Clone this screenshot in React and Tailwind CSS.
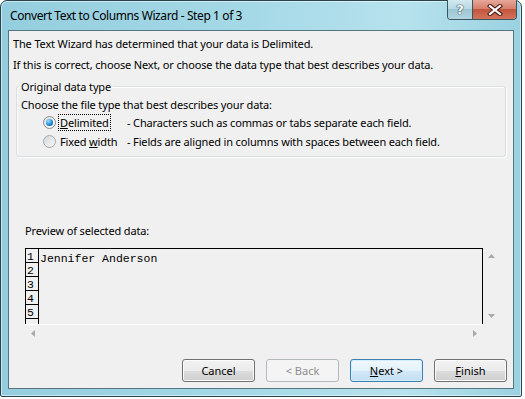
export default function App() {
  const rows = ["1", "2", "3", "4", "5"];

  const Arrow = ({ dir }) => {
    const pts = {
      up: "0,4 3.5,0 7,4",
      down: "0,0 3.5,4 7,0",
      left: "4,0 0,3.5 4,7",
      right: "0,0 4,3.5 0,7",
    }[dir];
    const wide = dir === "up" || dir === "down";
    return (
      <svg width={wide ? 7 : 4} height={wide ? 4 : 7}>
        <polygon points={pts} fill="#a9a9a9" />
      </svg>
    );
  };

  const btn =
    "w-[73px] h-[23px] rounded-[3px] border flex items-center justify-center text-[11px] leading-none";

  return (
    <div className="w-[525px] h-[399px] bg-white text-black font-['Noto_Sans',sans-serif]">
      <div className="w-[522px] h-[397px] flex flex-col rounded-t-[7px] rounded-b-[2px] border border-[#2b434c] bg-[linear-gradient(90deg,#94cede,#a4d8e6_45%,#b6e2ed_78%,#9ad1e0)] shadow-[inset_0_0_0_1px_rgba(255,255,255,0.5)]">
        {/* title bar */}
        <div className="h-[29px] flex items-start justify-between">
          <div className="pl-[9px] pt-[7px] text-[12px] leading-[15px] tracking-[-0.4px]">
            Convert Text to Columns Wizard - Step 1 of 3
          </div>
          <div className="mr-[4px] -mt-px flex h-[20px] rounded-b-[4px] border border-t-0 border-[#3a5560] overflow-hidden">
            <div className="w-[25px] h-full flex items-center justify-center border-r border-[#3a5560] bg-[linear-gradient(#d3e9ef,#b9d9e3_45%,#9cc6d3_50%,#b2d6e0)]">
              <span className="text-white font-bold text-[13px] leading-none font-['DejaVu_Sans',sans-serif] [text-shadow:0_0_1px_#2b4955,0_0_1px_#2b4955,0_0_1px_#2b4955]">
                ?
              </span>
            </div>
            <div className="w-[43px] h-full flex items-center justify-center bg-[linear-gradient(#e6a89a,#d7806d_45%,#c4553f_50%,#d3735c)]">
              <svg width="16" height="12" viewBox="0 0 16 12">
                <path d="M3 2 L13 10 M13 2 L3 10" stroke="#4a1a12" strokeWidth="4.2" strokeLinecap="square" />
                <path d="M3 2 L13 10 M13 2 L3 10" stroke="#ffffff" strokeWidth="2.2" strokeLinecap="square" />
              </svg>
            </div>
          </div>
        </div>

        {/* client area */}
        <div className="mx-[7px] mb-[7px] flex-1 border border-[#55757f] bg-[#f0f0f0] flex flex-col text-[11px] leading-[15px] tracking-[-0.15px]">
          <p className="pl-[4px] pt-[5px]">The Text Wizard has determined that your data is Delimited.</p>
          <p className="pl-[4px] mt-[6px]">
            If this is correct, choose Next, or choose the data type that best describes your data.
          </p>

          <fieldset className="mx-[7px] mt-[7px] border border-[#d5dfe5] rounded-[3px] pb-[5px] shadow-[inset_1px_1px_0_#fff,1px_1px_0_#fff]">
            <legend className="ml-[2px] px-[2px]">Original data type</legend>
            <div className="pl-[4px] pt-[3px]">
              <p>Choose the file type that best describes your data:</p>
              <div className="mt-[1px] pl-[22px]">
                <div className="h-[19px] flex items-center">
                  <span className="w-[13px] h-[13px] rounded-full border border-[#8a8f94] bg-[linear-gradient(135deg,#d9dde0,#fdfdfd)] flex items-center justify-center">
                    <span className="w-[7px] h-[7px] rounded-full bg-[radial-gradient(circle_at_35%_30%,#9fe2ff,#1e8ad6_55%,#0b3f7a)]" />
                  </span>
                  <span className="ml-[2px] w-[69px]">
                    <span className="border border-dotted border-black px-px">
                      <span className="underline">D</span>elimited
                    </span>
                  </span>
                  <span>- Characters such as commas or tabs separate each field.</span>
                </div>
                <div className="h-[19px] flex items-center">
                  <span className="w-[13px] h-[13px] rounded-full border border-[#a4a9ad] bg-[linear-gradient(135deg,#d4d8db,#f7f7f7)]" />
                  <span className="ml-[2px] w-[69px]">
                    <span className="border border-transparent px-px">
                      Fixed <span className="underline">w</span>idth
                    </span>
                  </span>
                  <span>- Fields are aligned in columns with spaces between each field.</span>
                </div>
              </div>
            </div>
          </fieldset>

          <p className="ml-[16px] mt-[66px]">Preview of selected data:</p>

          {/* preview control */}
          <div className="ml-[16px] mt-[10px] w-[475px] h-[93px] grid grid-cols-[458px_17px] grid-rows-[76px_17px] tracking-normal">
            <div className="border-t border-l border-r border-black flex overflow-hidden font-['Liberation_Mono',monospace] text-[11.5px] leading-[13px]">
              <div className="w-[13px] border-r border-black flex flex-col shrink-0">
                {rows.map((r) => (
                  <div key={r} className="h-[14px] shrink-0 border-b border-black pl-[1px] pt-[1px]">
                    {r}
                  </div>
                ))}
              </div>
              <div className="pl-[1px] pt-[3px]">Jennifer Anderson</div>
            </div>
            <div className="flex flex-col justify-between items-center py-[6px]">
              <Arrow dir="up" />
              <Arrow dir="down" />
            </div>
            <div className="border-t border-white flex items-center justify-between px-[6px]">
              <Arrow dir="left" />
              <Arrow dir="right" />
            </div>
            <div />
          </div>

          {/* buttons */}
          <div className="mt-auto mb-[6px] pr-[6px] flex justify-end gap-[11px] tracking-normal">
            <div className={`${btn} border-[#707070] bg-[linear-gradient(#f2f2f2,#ebebeb_50%,#dddddd_50%,#cfcfcf)] shadow-[inset_0_0_0_1px_#fbfbfb]`}>
              Cancel
            </div>
            <div className={`${btn} border-[#b3b8bb] bg-[#f4f4f4] text-[#8d8d8d]`}>&lt; Back</div>
            <div className={`${btn} border-[#3c7fb1] bg-[linear-gradient(#f1f8fc,#e3f1fa_50%,#d2e8f6_50%,#c4e0f2)] shadow-[inset_0_0_0_1px_#d0eefc]`}>
              <span>
                <span className="underline">N</span>ext &gt;
              </span>
            </div>
            <div className={`${btn} border-[#707070] bg-[linear-gradient(#f2f2f2,#ebebeb_50%,#dddddd_50%,#cfcfcf)] shadow-[inset_0_0_0_1px_#fbfbfb]`}>
              <span>
                <span className="underline">F</span>inish
              </span>
            </div>
          </div>
        </div>
      </div>
    </div>
  );
}
